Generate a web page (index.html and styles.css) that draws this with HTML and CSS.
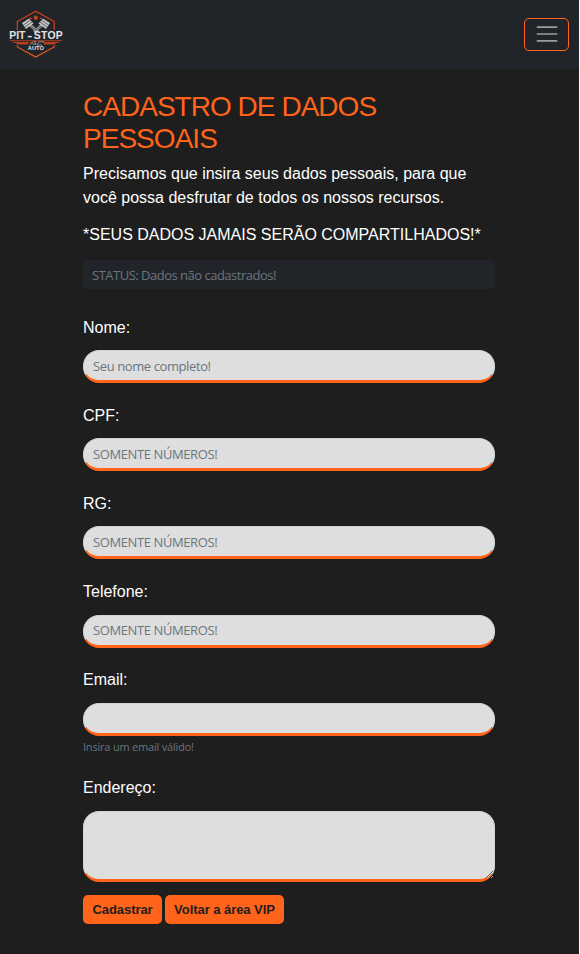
FILE: index.html
```html
<!DOCTYPE html>
<html lang="pt-BR">
<head>
<meta charset="utf-8">
<title>Pit-Stop Auto</title>
<link rel="stylesheet" href="styles.css">
</head>
<body>
<nav class="navbar">
  <svg class="logo" viewBox="0 0 58 52" aria-label="Pit-Stop Auto">
    <g fill="none" stroke="#d3401f" stroke-width="1.200">
      <path d="M9.300 22V13.500L27.700 3.300L46.200 13.500V22" />
      <path d="M9.300 37.500V39L27.700 49L46.200 39V37.500" stroke="#e85a1b" />
      <path d="M2 32.700H54" stroke-width=".8" />
    </g>
    <path fill="#b8401f" d="M5 34H21V35H20V36.500H9L8 35H6ZM35 34H51L50 35H48L47 36.500H36V35H35Z" />
    <g fill="#e0491f"><path d="M27.700 6.800l.8 1.700 1.900.2-1.400 1.300.4 1.900-1.700-1-1.700 1 .4-1.900-1.400-1.300 1.900-.2z" /><circle cx="22.700" cy="10.300" r=".9" /><circle cx="32.700" cy="10.300" r=".9" /></g>
    <path d="M21 16L30 24M35 16L26 24" stroke="#969696" stroke-width="3" />
    <path fill="#c4c4c4" d="M14 15L21 10.500L25.500 15.500L18 21ZM42 15L35 10.500L30.500 15.500L38 21Z" />
    <path d="M15.500 17L22.500 12M17 19L24 14M40.500 17L33.500 12M39 19L32 14M23 18L28 22M33 18L28 22" stroke="#444a4e" stroke-width=".8" />
    <g class="logo-name">
      <text x="1.300" y="31" textLength="16">PIT</text>
      <text x="19.300" y="31" textLength="5" lengthAdjust="spacingAndGlyphs">-</text>
      <text x="25.800" y="31" textLength="29">STOP</text>
    </g>
    <path d="M21.500 37L25 33.800H28L27 37M24 36H28M36 33.800H31L29 37H34" fill="none" stroke="#aaa" stroke-width=".8" />
    <path d="M22 35.500L26 33.500" stroke="#d3401f" />
    <text class="logo-sub" x="19.800" y="42" textLength="16" lengthAdjust="spacingAndGlyphs">AUTO</text>
  </svg>
  <button class="toggler" aria-label="Menu">
    <svg viewBox="0 0 30 30"><path d="M4 7h22M4 15h22M4 23h22" stroke="#fff" stroke-opacity=".55" stroke-linecap="round" stroke-width="2" stroke-miterlimit="10" /></svg>
  </button>
</nav>
<main class="content">
  <h1>CADASTRO DE DADOS PESSOAIS</h1>
  <p>Precisamos que insira seus dados pessoais, para que você possa desfrutar de todos os nossos recursos.</p>
  <p>*SEUS DADOS JAMAIS SERÃO COMPARTILHADOS!*</p>
  <form>
    <div class="status">STATUS: Dados não cadastrados!</div>
    <label for="nome">Nome:</label>
    <input class="field" id="nome" placeholder="Seu nome completo!">
    <label for="cpf">CPF:</label>
    <input class="field" id="cpf" placeholder="SOMENTE NÚMEROS!">
    <label for="rg">RG:</label>
    <input class="field" id="rg" placeholder="SOMENTE NÚMEROS!">
    <label for="tel">Telefone:</label>
    <input class="field" id="tel" placeholder="SOMENTE NÚMEROS!">
    <label for="email">Email:</label>
    <input class="field" id="email" type="email">
    <div class="hint">Insira um email válido!</div>
    <label for="end">Endereço:</label>
    <textarea class="field area" id="end"></textarea>
    <div class="actions">
      <button class="btn save" type="button">Cadastrar</button>
      <button class="btn back" type="button">Voltar a área VIP</button>
    </div>
  </form>
</main>
</body>
</html>
```
FILE: styles.css
```css
* { box-sizing: border-box; }
html { background: #fff; }
body { width: 579px; margin: 0; min-height: 954px; background: #1e1e1e; color: #fff; font: 16px/24px "Liberation Sans", Arial, sans-serif; }
.navbar { height: 69px; padding: 0 10px 0 8px; display: flex; align-items: center; justify-content: space-between; background: #212529; }
.logo { width: 58px; height: 52px; position: relative; top: -1px; }
.logo text { font-family: "Liberation Sans", sans-serif; font-weight: bold; fill: #e4e4e4; }
.logo-name { font-size: 10.4px; }
.logo-sub { font-size: 6px; }
.toggler { width: 45px; height: 33px; padding: 0; display: flex; align-items: center; justify-content: center; background: none; border: 1px solid #ff641a; border-radius: 5px; }
.toggler svg { width: 26px; height: 26px; position: relative; top: -1px; }
.content { width: 412px; margin-left: 83px; padding-top: 22px; }
h1 { margin: 0 0 7px; color: #ff641a; font-size: 28px; line-height: 32px; font-weight: 400; letter-spacing: -.97px; }
p { margin: 0 0 13px; }
form { display: flex; flex-direction: column; font-family: "Open Sans", "Noto Sans", sans-serif; }
.status { height: 29px; margin-bottom: 6px; padding: 0 9px; background: #212529; border-radius: 4px; color: #6c757d; font-size: 13px; line-height: 31px; letter-spacing: -.5px; }
label { margin: 20.85px 0 10.3px; font: 16px/24px "Liberation Sans", Arial, sans-serif; }
.field { display: block; width: 100%; height: 33px; margin: 0; padding: 0 9px; border: 1px solid #ced4da; border-bottom: 3px solid #ff641a; border-radius: 16px; background: #dedede; font: 13px/20px "Open Sans", "Noto Sans", sans-serif; letter-spacing: -.4px; outline: 0; }
.field::placeholder { color: #6c757d; opacity: 1; }
.area { height: 71px; }
.hint { height: 16.8px; margin-top: 3px; color: #6c757d; font-size: 11px; line-height: 16px; letter-spacing: -.2px; }
.actions { display: flex; gap: 3px; margin-top: 13.2px; }
.btn { height: 29px; padding: 1px 0 0; border: 0; border-radius: 5px; background: #ff641a; color: #1e1e1e; font: bold 13px/20px "Liberation Sans", Arial, sans-serif; letter-spacing: -.05px; }
.save { width: 79px; }
.back { width: 119px; }
```
